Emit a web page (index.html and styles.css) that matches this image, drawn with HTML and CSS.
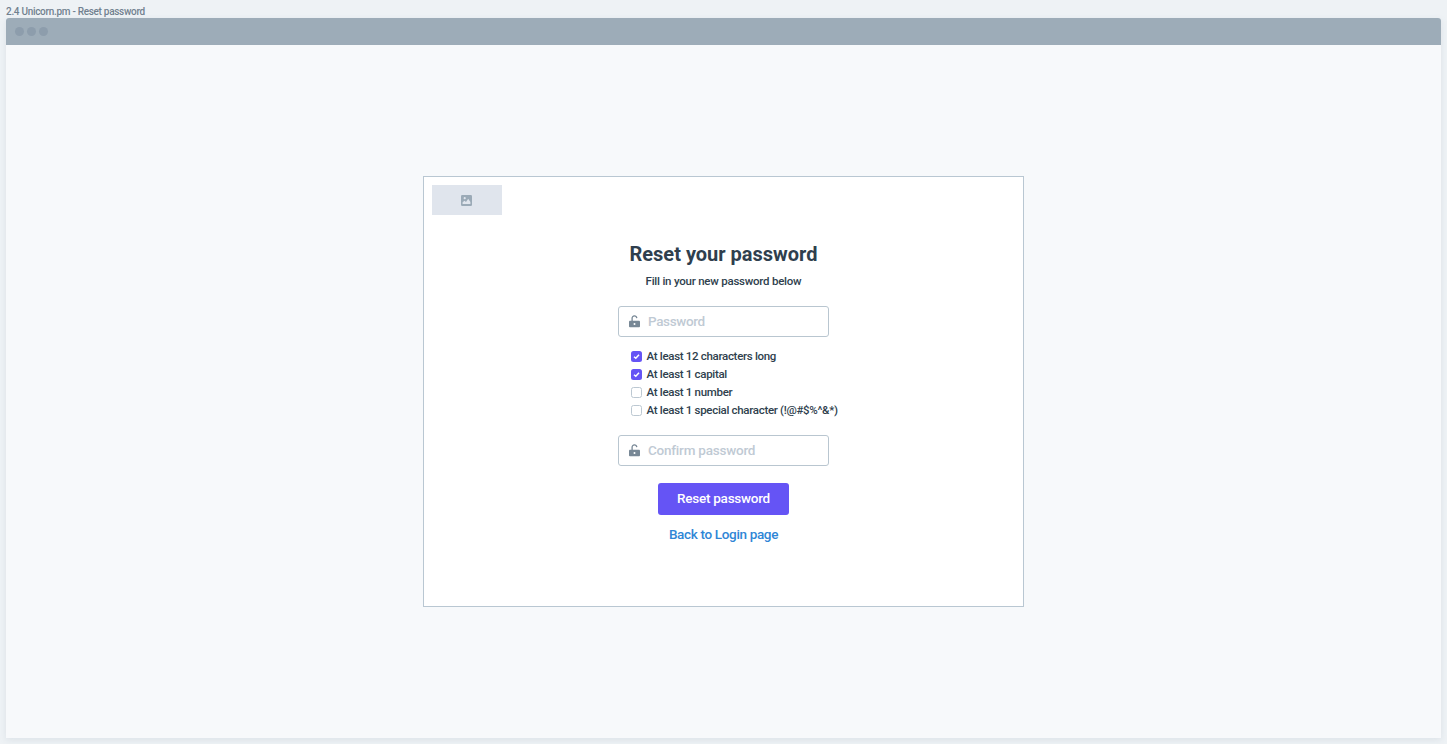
FILE: index.html
```html
<!DOCTYPE html>
<html lang="en">
<head>
<meta charset="utf-8">
<title>Unicorn.pm - Reset password</title>
<link rel="stylesheet" href="styles.css">
</head>
<body>
<div class="frame-label"><span>2.4 Unicorn.pm - Reset password</span></div>
<div class="window">
  <div class="titlebar"><i class="dot"></i><i class="dot"></i><i class="dot"></i></div>
  <main class="viewport">
    <section class="card">
      <div class="logo">
        <svg width="11" height="11" viewBox="0 0 11 11"><rect width="11" height="11" rx="1.3" fill="#9baab7"/><circle cx="3.7" cy="3.2" r="1.1" fill="#e0e5ed"/><path d="M1.6 9V7.3L3.5 5.8L5 7L7.2 3.8L9.4 7V9Z" fill="#e0e5ed"/></svg>
      </div>
      <h1 class="heading"><span>Reset your password</span></h1>
      <p class="intro"><span>Fill in your new password below</span></p>
      <div class="field">
        <svg class="lock" width="11" height="13" viewBox="0 0 11 13"><path d="M3.1 6V3.3A2.35 2.35 0 0 1 7.8 3.1" fill="none" stroke="#788896" stroke-width="1.3"/><rect y="5.7" width="11" height="6.5" rx=".9" fill="#788896"/><circle cx="5.5" cy="9" r="1" fill="#fff"/></svg>
        <span class="placeholder password">Password</span>
      </div>
      <ul class="rules">
        <li><i class="box checked"><svg width="11" height="11" viewBox="0 0 11 11"><path d="M3 5.7L4.8 7.3L8 3.8" fill="none" stroke="#fff" stroke-width="1.5"/></svg></i><span>At least 12 characters long</span></li>
        <li><i class="box checked"><svg width="11" height="11" viewBox="0 0 11 11"><path d="M3 5.7L4.8 7.3L8 3.8" fill="none" stroke="#fff" stroke-width="1.5"/></svg></i><span>At least 1 capital</span></li>
        <li><i class="box"></i><span>At least 1 number</span></li>
        <li><i class="box"></i><span>At least 1 special character (!@#$%^&amp;*)</span></li>
      </ul>
      <div class="field">
        <svg class="lock" width="11" height="13" viewBox="0 0 11 13"><path d="M3.1 6V3.3A2.35 2.35 0 0 1 7.8 3.1" fill="none" stroke="#788896" stroke-width="1.3"/><rect y="5.7" width="11" height="6.5" rx=".9" fill="#788896"/><circle cx="5.5" cy="9" r="1" fill="#fff"/></svg>
        <span class="placeholder confirm">Confirm password</span>
      </div>
      <div class="submit"><span>Reset password</span></div>
      <div class="back"><span>Back to Login page</span></div>
    </section>
  </main>
</div>
</body>
</html>
```
FILE: styles.css
```css
* { box-sizing: border-box; }
body { margin: 0; height: 744px; overflow: hidden; background: #eef2f5; font-family: Roboto, "Liberation Sans", sans-serif; font-weight: 500; color: #2f3f4e; display: flex; flex-direction: column; }
span { white-space: nowrap; }
.frame-label { height: 18px; padding: 6px 0 0 6px; font-size: 10px; line-height: 12px; color: #71818f; letter-spacing: -.3px; }
.window { width: 1435px; height: 720px; margin-left: 6px; border-radius: 3px 3px 0 0; overflow: hidden; background: #f7f9fb; box-shadow: 0 2px 6px rgba(130,150,165,.16); display: flex; flex-direction: column; }
.titlebar { height: 27px; background: #9dacb8; display: flex; align-items: center; gap: 3px; padding-left: 9px; }
.dot { width: 9px; height: 9px; border-radius: 50%; background: #8d9dac; }
.viewport { flex: 1; display: flex; justify-content: center; align-items: flex-start; padding-top: 131px; }
.card { width: 601px; height: 431px; background: #fff; border: 1px solid #b9c7d2; display: flex; flex-direction: column; align-items: center; padding: 8px; }
.logo { align-self: flex-start; width: 70px; height: 30px; background: #e0e5ed; display: flex; align-items: center; justify-content: center; padding-right: 1px; }
.heading { margin: 27px 0 0; font-size: 20px; line-height: 24px; font-weight: 700; }
.intro { margin: 8px 0 0; font-size: 11.5px; line-height: 14px; letter-spacing: -.23px; }
.field { width: 211px; height: 31px; margin-top: 18px; border: 1px solid #b9c6d0; border-radius: 3px; display: flex; align-items: center; gap: 8px; padding: 0 0 1px 10px; background: #fff; }
.lock { flex: none; }
.placeholder { font-size: 13.5px; line-height: 18px; color: #bfcad4; letter-spacing: -.22px; }
.password { letter-spacing: -.35px; }
.rules { list-style: none; width: 186px; margin: 10px 0 -2px; padding: 0; font-size: 11.5px; letter-spacing: -.31px; }
.rules li { height: 18px; display: flex; align-items: center; gap: 5px; }
.box { flex: none; width: 11px; height: 11px; border: 1px solid #bcc8d2; border-radius: 2.5px; background: #fff; }
.box.checked { border: 0; background: #6554f5; }
.box svg { display: block; }
.submit { width: 131px; height: 32px; margin-top: 17px; background: #6554f5; border-radius: 3px; color: #fff; font-size: 13.5px; line-height: 31px; text-align: center; letter-spacing: -.25px; }
.back { margin-top: 10px; font-size: 13.5px; line-height: 18px; color: #2f86d6; letter-spacing: -.34px; }
```
